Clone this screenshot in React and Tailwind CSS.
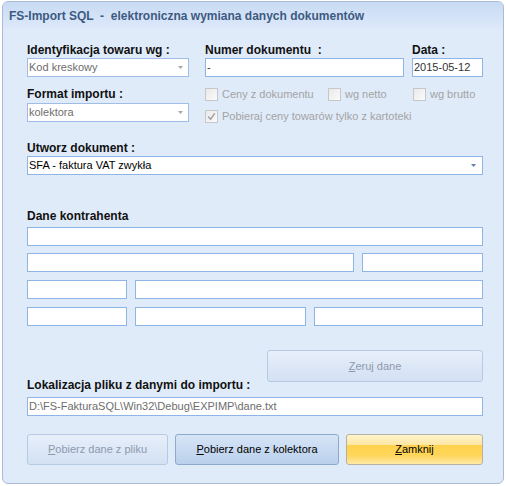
import React from "react";

const font = "font-['Liberation_Sans',Arial,sans-serif]";

function Arrow({ color }) {
  return (
    <svg width="5" height="3" viewBox="0 0 5 3">
      <path d="M0 0H5L2.5 3Z" fill={color} />
    </svg>
  );
}

function Combo({ value, className, textClass, arrowColor, arrowPad }) {
  return (
    <div
      className={
        "h-[19px] flex items-center justify-between border bg-white " + className
      }
    >
      <span className={"leading-[17px] " + textClass}>{value}</span>
      <span className={arrowPad}>
        <Arrow color={arrowColor} />
      </span>
    </div>
  );
}

function Field({ value, className, textClass }) {
  return (
    <div
      className={
        "h-[19px] border border-[#8fb4e6] bg-white leading-[17px] shrink-0 " +
        (className || "")
      }
    >
      <span className={textClass}>{value}</span>
    </div>
  );
}

function Check({ checked, label, className }) {
  return (
    <div className={"flex items-center h-[13px] " + (className || "")}>
      <div className="w-[13px] h-[13px] border border-[#c7c7c7] bg-gradient-to-br from-[#e9e9e9] to-[#fbfbfb] flex items-center justify-center">
        {checked && (
          <svg width="9" height="9" viewBox="0 0 9 9">
            <path
              d="M1.2 4.6L3.6 7.2L7.8 1.4"
              stroke="#a4a4a4"
              strokeWidth="1.6"
              fill="none"
            />
          </svg>
        )}
      </div>
      <span className="ml-[4px] text-[#a3a3a3] whitespace-nowrap">{label}</span>
    </div>
  );
}

function Label({ children, className }) {
  return (
    <div
      className={
        "h-[14px] leading-[14px] text-[12px] font-bold text-[#111] whitespace-pre shrink-0 " +
        (className || "")
      }
    >
      {children}
    </div>
  );
}

export default function App() {
  return (
    <div className={"w-[506px] h-[486px] bg-white pt-[1px] pl-[2px] text-[11px] " + font}>
      <div className="w-[502px] h-[483px] rounded-[6px] border border-[#a9bbd5] bg-[#e0ebfa] overflow-hidden flex flex-col">
        <div className="h-[28px] bg-gradient-to-b from-[#c7daf3] to-[#dfeafa] pl-[6px] pt-[7px]">
          <div className="text-[12px] leading-[14px] font-bold text-[#3d5a82] whitespace-pre">
            FS-Import SQL  -  elektroniczna wymiana danych dokumentów
          </div>
        </div>

        <div className="pl-[24px] pr-[20px] flex flex-col">
          <div className="flex mt-[13px]">
            <Label className="w-[162px]">Identyfikacja towaru wg :</Label>
            <Label className="ml-[16px] w-[207px]">Numer dokumentu  :</Label>
            <Label>Data :</Label>
          </div>
          <div className="flex mt-[1px]">
            <Combo
              value="Kod kreskowy"
              className="w-[162px] shrink-0 border-[#9fbde6] pl-[1px]"
              textClass="text-[#6e6e6e]"
              arrowColor="#a7a7a7"
              arrowPad="pr-[5px]"
            />
            <Field value="-" className="ml-[16px] w-[199px] pl-[1px]" textClass="text-[#333]" />
            <Field
              value="2015-05-12"
              className="ml-[8px] w-[71px] pl-[1px]"
              textClass="text-[#333]"
            />
          </div>

          <div className="flex mt-[10px]">
            <div className="w-[162px] shrink-0 flex flex-col">
              <Label>Format importu :</Label>
              <Combo
                value="kolektora"
                className="mt-[2px] border-[#9fbde6] pl-[1px]"
                textClass="text-[#6e6e6e]"
                arrowColor="#a7a7a7"
                arrowPad="pr-[5px]"
              />
            </div>
            <div className="ml-[16px] flex flex-col pt-[1px]">
              <div className="flex">
                <Check label="Ceny z dokumentu" className="w-[123px]" />
                <Check label="wg netto" className="w-[85px]" />
                <Check label="wg brutto" />
              </div>
              <Check checked label="Pobieraj ceny towarów tylko z kartoteki" className="mt-[9px]" />
            </div>
          </div>

          <Label className="mt-[18px]">Utworz dokument :</Label>
          <Combo
            value="SFA - faktura VAT zwykła"
            className="mt-[1px] border-[#8fb4e6] pl-[1px]"
            textClass="text-[#000]"
            arrowColor="#5f7fae"
            arrowPad="pr-[6px]"
          />

          <Label className="mt-[34px]">Dane kontrahenta</Label>
          <Field className="mt-[4px]" />
          <div className="flex gap-[8px] mt-[7px]">
            <Field className="w-[327px]" />
            <Field className="flex-1" />
          </div>
          <div className="flex gap-[8px] mt-[8px]">
            <Field className="w-[100px]" />
            <Field className="flex-1" />
          </div>
          <div className="flex gap-[8px] mt-[8px]">
            <Field className="w-[100px]" />
            <Field className="w-[171px]" />
            <Field className="flex-1" />
          </div>

          <div className="flex justify-end mt-[24px]">
            <button className="w-[216px] h-[32px] rounded-[3px] border border-[#b7cae3] bg-gradient-to-b from-[#e7effa] to-[#d3e1f3] text-[#8c99ad]">
              <span className="underline">Z</span>eruj dane
            </button>
          </div>

          <Label className="-mt-[4px]">Lokalizacja pliku z danymi do importu :</Label>
          <Field
            value="D:\FS-FakturaSQL\Win32\Debug\EXPIMP\dane.txt"
            className="mt-[5px] pl-[1px]"
            textClass="text-[#6e6e6e]"
          />

          <div className="flex gap-[7px] mt-[18px]">
            <button className="w-[141px] h-[31px] rounded-[3px] border border-[#b7cae3] bg-gradient-to-b from-[#e7effa] to-[#d3e1f3] text-[#8c99ad]">
              <span className="underline">P</span>obierz dane z pliku
            </button>
            <button className="w-[164px] h-[31px] rounded-[3px] border border-[#8ea9cd] bg-gradient-to-b from-[#d6e5f7] to-[#bad0ec] text-[#000]">
              <span className="underline">P</span>obierz dane z kolektora
            </button>
            <button className="w-[137px] h-[31px] rounded-[3px] border border-[#b5b0a0] bg-[linear-gradient(to_bottom,#fff4cc_0%,#fde7a4_33%,#ffd24c_34%,#ffd65a_70%,#ffe9a6_100%)] text-[#000]">
              <span className="underline">Z</span>amknij
            </button>
          </div>
        </div>
      </div>
    </div>
  );
}
